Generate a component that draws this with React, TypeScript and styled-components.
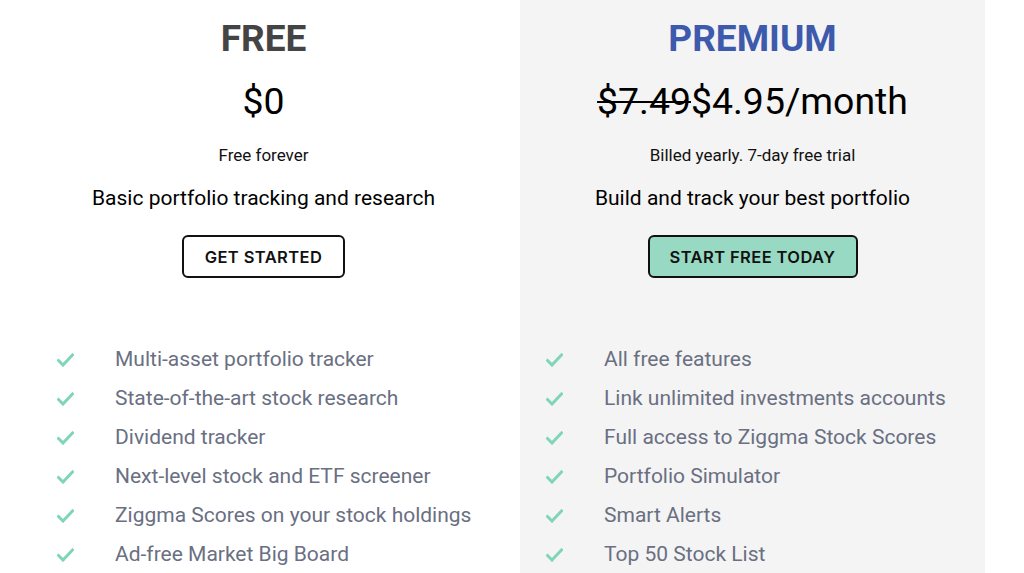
import React from "react";
import styled, { createGlobalStyle } from "styled-components";

const Global = createGlobalStyle`
  html, body { margin: 0; padding: 0; background: #ffffff; }
  body { font-family: Roboto, "Liberation Sans", sans-serif; overflow: hidden; }
`;

const Page = styled.div`
  display: flex;
  gap: 24px;
  padding-left: 31px;
  height: 573px;
  overflow: hidden;
`;

const Panel = styled.section<{ $shaded?: boolean }>`
  width: 465px;
  flex: none;
  background: ${(p) => (p.$shaded ? "#f4f4f4" : "#ffffff")};
  padding-top: 17px;
  display: flex;
  flex-direction: column;
  align-items: center;
  box-sizing: border-box;
`;

const Title = styled.h2<{ $color: string }>`
  margin: 0;
  font-size: 37px;
  line-height: 44px;
  font-weight: 700;
  color: ${(p) => p.$color};
`;

const Price = styled.div`
  margin-top: 18px;
  font-size: 37.4px;
  line-height: 44px;
  font-weight: 400;
  color: #000;
`;

const Old = styled.s`
  text-decoration-thickness: 2px;
`;

const Note = styled.div`
  margin-top: 22px;
  font-size: 17px;
  line-height: 20px;
  color: #111;
`;

const Tagline = styled.div`
  margin-top: 21px;
  font-size: 21px;
  line-height: 24px;
  color: #000;
`;

const Button = styled.button<{ $fill?: string; $w: number }>`
  margin-top: 25px;
  width: ${(p) => p.$w}px;
  height: 43px;
  border: 2px solid #111;
  border-radius: 6px;
  background: ${(p) => p.$fill || "#ffffff"};
  font-family: Inter, "Liberation Sans", sans-serif;
  font-size: 16.5px;
  font-weight: 600;
  letter-spacing: 0.4px;
  color: #111;
  cursor: pointer;
  padding: 0;
`;

const List = styled.ul`
  list-style: none;
  margin: 61px 0 0 0;
  padding: 0 0 0 26px;
  align-self: stretch;
`;

const Item = styled.li`
  display: flex;
  align-items: center;
  height: 39px;
  font-size: 21px;
  color: #6a6f82;
`;

const Check = styled.svg`
  width: 17px;
  height: 14px;
  flex: none;
  margin-right: 41px;
  margin-top: 2px;
`;

const CheckIcon = () => (
  <Check viewBox="0 0 17 14">
    <path d="M1.5 7.5 L6 12 L15.5 2" fill="none" stroke="#7fd5b7" strokeWidth="3" strokeLinecap="square" />
  </Check>
);

const freeFeatures = [
  "Multi-asset portfolio tracker",
  "State-of-the-art stock research",
  "Dividend tracker",
  "Next-level stock and ETF screener",
  "Ziggma Scores on your stock holdings",
  "Ad-free Market Big Board",
];

const premiumFeatures = [
  "All free features",
  "Link unlimited investments accounts",
  "Full access to Ziggma Stock Scores",
  "Portfolio Simulator",
  "Smart Alerts",
  "Top 50 Stock List",
];

export default function App() {
  return (
    <>
      <Global />
      <Page>
        <Panel>
          <Title $color="#444444">FREE</Title>
          <Price>$0</Price>
          <Note>Free forever</Note>
          <Tagline>Basic portfolio tracking and research</Tagline>
          <Button $w={163}>GET STARTED</Button>
          <List>
            {freeFeatures.map((f) => (
              <Item key={f}>
                <CheckIcon />
                {f}
              </Item>
            ))}
          </List>
        </Panel>
        <Panel $shaded>
          <Title $color="#3e5aad">PREMIUM</Title>
          <Price>
            <Old>$7.49</Old>$4.95/month
          </Price>
          <Note>Billed yearly. 7-day free trial</Note>
          <Tagline>Build and track your best portfolio</Tagline>
          <Button $w={210} $fill="#97d9c3">START FREE TODAY</Button>
          <List>
            {premiumFeatures.map((f) => (
              <Item key={f}>
                <CheckIcon />
                {f}
              </Item>
            ))}
          </List>
        </Panel>
      </Page>
    </>
  );
}
